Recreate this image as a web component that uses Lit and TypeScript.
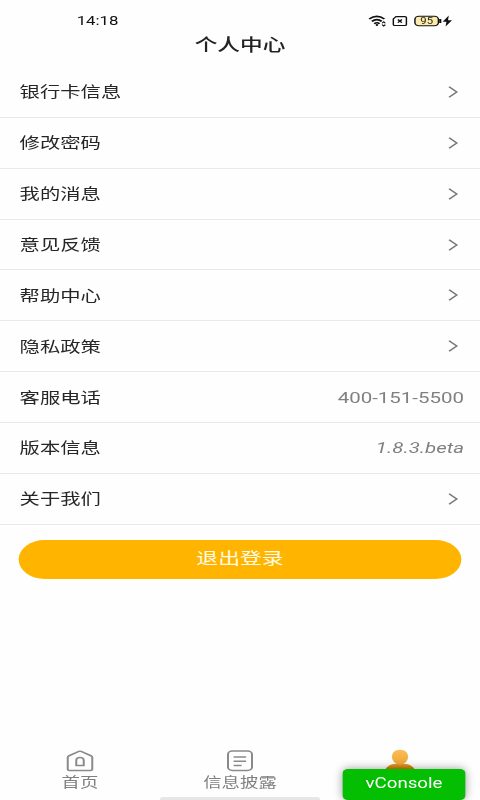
import { LitElement, html, css, svg, nothing } from "lit";
import { customElement, property } from "lit/decorators.js";

interface Row {
  label: string;
  value?: string;
  italic?: boolean;
}

const ROWS: Row[] = [
  { label: "银行卡信息" },
  { label: "修改密码" },
  { label: "我的消息" },
  { label: "意见反馈" },
  { label: "帮助中心" },
  { label: "隐私政策" },
  { label: "客服电话", value: "400-151-5500" },
  { label: "版本信息", value: "1.8.3.beta", italic: true },
  { label: "关于我们" },
];

@customElement("status-bar")
class StatusBar extends LitElement {
  static styles = css`
    :host {
      display: flex;
      justify-content: space-between;
      align-items: center;
      height: 16px;
      padding: 12.5px 20.5px 0 57.5px;
      color: #111;
    }
    .time {
      font-size: 12.6px;
      line-height: 16px;
    }
    .icons {
      display: block;
      width: 64px;
      height: 14px;
    }
    .level {
      font-size: 8.5px;
    }
  `;
  render() {
    return html`
      <span class="time">14:18</span>
      <svg class="icons" viewBox="0 0 64 14" fill="none" stroke="#111">
        <path d="M.9 5 Q6.7 -.2 12.3 5" stroke-width="1.6" />
        <path d="M2.9 7.4 Q6.7 3.8 10.3 7.4" stroke-width="1.6" />
        <path d="M4.7 9.7 Q6.7 7.6 8.7 9.7" stroke-width="1.5" />
        <circle cx="6.7" cy="11.1" r="1" fill="#111" stroke="none" />
        <path d="M10.6 9.3 L11.8 7.8 L13 9.3 M10.6 10.6 L11.8 12 L13 10.6" stroke-width="1" />
        <path d="M21 2.6 H27.8 Q28.8 2.6 28.8 3.6 V10.5 Q28.8 11.5 27.8 11.5 H20 Q19 11.5 19 10.5 V5 Z" stroke-width="1.1" />
        <path d="M22.4 5.5 L25.4 8.7 M25.4 5.5 L22.4 8.7" stroke-width="1.1" />
        <rect x="35.2" y="2.2" width="17.6" height="9.6" rx="3" fill="#fbecae" stroke-width="1.1" />
        <path d="M54.2 5 V9" stroke-width="1.6" />
        <text class="level" x="44" y="10.1" text-anchor="middle" fill="#222" stroke="none">95</text>
        <path d="M60.6 1.6 L56 7.8 H58.8 L58.2 12.4 L63 6.2 H60 Z" fill="#111" stroke="none" />
      </svg>
    `;
  }
}

@customElement("menu-row")
class MenuRow extends LitElement {
  @property() label = "";
  @property() value = "";
  @property({ type: Boolean }) italic = false;
  static styles = css`
    :host {
      display: flex;
      box-sizing: border-box;
      height: 50.87px;
      padding: 0 12px 0 14.7px;
      align-items: center;
      justify-content: space-between;
      border-bottom: 1px solid #e9e9e9;
      font-size: 15.25px;
      color: #262626;
    }
    .label {
      padding-bottom: 3px;
    }
    .value {
      padding-top: 1px;
      color: #808080;
      font-size: 15.35px;
    }
    .italic {
      font-style: italic;
    }
    .arrow {
      display: block;
      width: 8px;
      height: 14px;
      margin-right: 4px;
    }
  `;
  render() {
    return html`
      <span class="label">${this.label}</span>
      ${this.value
        ? html`<span class="value ${this.italic ? "italic" : ""}">${this.value}</span>`
        : html`<svg class="arrow" viewBox="0 0 8 14">
            <path d="M.8 1.8 L6.6 7 L.8 12.2" fill="none" stroke="#787878" stroke-width="1.3" />
          </svg>`}
    `;
  }
}

const homeIcon = svg`
  <path d="M10.2 1.4 Q11 1 11.8 1.4 L19.6 6 Q20.2 6.4 20.2 7.2 V19.2 Q20.2 20.4 19 20.4 H3 Q1.8 20.4 1.8 19.2 V7.2 Q1.8 6.4 2.4 6 Z" />
  <path d="M8.2 15.4 V10.4 Q8.2 7.4 11 7.4 Q13.8 7.4 13.8 10.4 V15.4 Z" />
`;
const docIcon = svg`
  <rect x="2" y="1.1" width="18" height="19.4" rx="3.2" />
  <path d="M6.2 7 H15.6 M6.2 11.3 H15.6 M6.2 15.4 H12.2" />
`;
const personIcon = svg`
  <defs>
    <linearGradient id="head" x1="0" y1="0" x2="0" y2="1">
      <stop offset="0" stop-color="#fabd58" />
      <stop offset="1" stop-color="#eda636" />
    </linearGradient>
    <linearGradient id="body" x1="0" y1="0" x2="0" y2="1">
      <stop offset="0" stop-color="#e59b28" />
      <stop offset="1" stop-color="#c87900" />
    </linearGradient>
  </defs>
  <path d="M0 20.5 Q1 14.2 8 13.8 H14 Q21 14.2 22 20.5 Z" fill="url(#body)" stroke="none" />
  <path d="M11 -.2 C15 -.2 17 3 17 6.8 C17 11.5 14 14.6 11 14.6 C8 14.6 5 11.5 5 6.8 C5 3 7 -.2 11 -.2 Z" fill="url(#head)" stroke="none" />
`;

@customElement("tab-item")
class TabItem extends LitElement {
  @property() label = "";
  @property({ attribute: false }) icon: unknown = nothing;
  static styles = css`
    :host {
      display: flex;
      flex: 1;
      flex-direction: column;
      align-items: center;
      font-size: 13.8px;
      line-height: 20px;
      color: #808080;
    }
    svg {
      display: block;
      flex: none;
      width: 22px;
      height: 22px;
      margin-bottom: 0.5px;
      overflow: visible;
    }
  `;
  render() {
    return html`
      <svg viewBox="0 0 22 22" fill="none" stroke="#8a8a8a" stroke-width="1.5">${this.icon}</svg>
      <span>${this.label}</span>
    `;
  }
}

@customElement("app-root")
class AppRoot extends LitElement {
  static styles = css`
    :host {
      display: block;
      width: 480px;
      height: 800px;
      overflow: hidden;
      background: #fefefe;
    }
    /* 360-unit wide screen shown at the window's 480px width */
    .screen {
      position: relative;
      display: flex;
      flex-direction: column;
      width: 360px;
      height: 800px;
      transform: scaleX(1.33333);
      transform-origin: 0 0;
      font-family: Roboto, "Noto Sans CJK SC", sans-serif;
    }
    .title {
      height: 38.5px;
      line-height: 33px;
      text-align: center;
      font-size: 17px;
      font-weight: 500;
      color: #222;
    }
    .logout {
      flex: none;
      height: 39px;
      margin: 15px 14px 0;
      padding: 0 0 2px;
      border: 0;
      border-radius: 20px;
      background: #ffb500;
      color: #fffbe8;
      font: inherit;
      font-size: 16.4px;
      line-height: 37px;
    }
    .tabs {
      display: flex;
      margin-top: auto;
      height: 47.5px;
    }
    .indicator {
      align-self: center;
      width: 120px;
      height: 3px;
      border-radius: 2px 2px 0 0;
      background: #e6e6e6;
    }
    .console {
      position: absolute;
      left: 257px;
      top: 768.5px;
      width: 92px;
      height: 31px;
      border-radius: 4px;
      background: #04be02;
      box-shadow: 0 0 8px rgba(0, 0, 0, 0.4);
      color: #fff;
      text-align: center;
      font-size: 14px;
      line-height: 28.5px;
    }
  `;
  render() {
    return html`
      <div class="screen">
        <status-bar></status-bar>
        <div class="title">个人中心</div>
        <div>
          ${ROWS.map(
            (r) => html`<menu-row .label=${r.label} .value=${r.value ?? ""} .italic=${!!r.italic}></menu-row>`
          )}
        </div>
        <button class="logout">退出登录</button>
        <div class="tabs">
          <tab-item label="首页" .icon=${homeIcon}></tab-item>
          <tab-item label="信息披露" .icon=${docIcon}></tab-item>
          <tab-item .icon=${personIcon}></tab-item>
        </div>
        <div class="indicator"></div>
        <div class="console">vConsole</div>
      </div>
    `;
  }
}
